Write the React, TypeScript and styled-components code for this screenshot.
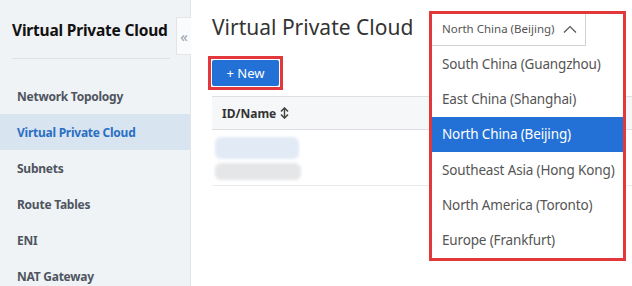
import React from "react";
import styled, { createGlobalStyle } from "styled-components";

const GlobalStyle = createGlobalStyle`
  html, body {
    margin: 0;
    padding: 0;
    background: #fff;
  }
  body {
    font-family: "Noto Sans", "Open Sans", Arial, sans-serif;
    color: #333;
  }
`;

const Page = styled.div`
  display: flex;
  width: 632px;
  height: 286px;
  overflow: hidden;
`;

const Sidebar = styled.aside`
  position: relative;
  flex: 0 0 190px;
  background: #f0f3f6;
  border-right: 1px solid #e3e7ea;
`;

const SideTitle = styled.div`
  height: 59px;
  margin: 0 20px 0 12px;
  padding-top: 2px;
  box-sizing: border-box;
  display: flex;
  align-items: center;
  font-size: 15.5px;
  font-weight: 700;
  color: #111;
  letter-spacing: -0.2px;
  border-bottom: 1px solid #dde2e6;
  white-space: nowrap;
`;

const Collapse = styled.div`
  position: absolute;
  top: 17px;
  right: -1px;
  width: 15px;
  height: 38px;
  background: #f9fbfc;
  border: 1px solid #e1e5e8;
  border-right: none;
  box-sizing: border-box;
  display: flex;
  align-items: center;
  justify-content: center;
  color: #9aa3ac;
  font-size: 15px;
`;

const Menu = styled.ul`
  list-style: none;
  margin: 19px 0 0;
  padding: 0;
`;

const MenuItem = styled.li<{ active?: boolean }>`
  height: 36px;
  display: flex;
  align-items: center;
  padding-left: 17px;
  font-size: 12px;
  font-weight: 700;
  letter-spacing: -0.25px;
  color: ${(p) => (p.active ? "#2a6fc4" : "#4f5560")};
  background: ${(p) => (p.active ? "#d8e4f0" : "transparent")};
`;

const Main = styled.main`
  position: relative;
  flex: 1;
  padding: 0 0 0 21px;
`;

const PageTitle = styled.h1`
  margin: 0;
  height: 56px;
  display: flex;
  align-items: center;
  padding-bottom: 2px;
  box-sizing: border-box;
  font-size: 21px;
  font-weight: 400;
  color: #333;
  letter-spacing: 0;
`;

const Highlight = styled.div`
  display: inline-flex;
  border: 3px solid #e2383c;
  padding: 1px;
  margin-left: -4px;
`;

const PrimaryButton = styled.button`
  width: 67px;
  height: 26px;
  border: none;
  border-radius: 2px;
  background: #2371d6;
  color: #fff;
  font-family: inherit;
  font-size: 13px;
  padding: 0;
`;

const Table = styled.div`
  margin-top: 6px;
  width: 440px;
`;

const HeadRow = styled.div`
  height: 32px;
  display: flex;
  align-items: center;
  padding-left: 10px;
  background: #f6f7f9;
  border-top: 1px solid #dcdfe3;
  border-bottom: 1px solid #dcdfe3;
  font-size: 12px;
  font-weight: 700;
  color: #333;
  gap: 4px;
`;

const BodyRow = styled.div`
  height: 56px;
  border-bottom: 1px solid #e8eaec;
  display: flex;
  flex-direction: column;
  gap: 4px;
  padding: 7px 0 0 3px;
  box-sizing: border-box;
`;

const Blur = styled.div<{ tone: string; w: number; h: number }>`
  width: ${(p) => p.w}px;
  height: ${(p) => p.h}px;
  background: ${(p) => p.tone};
  border-radius: 6px;
  filter: blur(1.5px);
`;

const Dropdown = styled.div`
  position: absolute;
  top: 11px;
  left: 238px;
  width: 191px;
  background: #fff;
  border: 3px solid #e2383c;
`;

const Trigger = styled.div`
  width: 154px;
  height: 32px;
  box-sizing: border-box;
  border-right: 1px solid #cfd3d7;
  border-bottom: 1px solid #cfd3d7;
  display: flex;
  align-items: center;
  padding: 0 0 2px 10px;
  font-size: 11.5px;
  color: #555;
  gap: 8px;
`;

const Option = styled.div<{ selected?: boolean }>`
  height: 35.3px;
  display: flex;
  align-items: center;
  padding-left: 10px;
  font-size: 13.5px;
  color: ${(p) => (p.selected ? "#fff" : "#555")};
  background: ${(p) => (p.selected ? "#2371d6" : "#fff")};
  white-space: nowrap;
  letter-spacing: -0.15px;
`;

const SortIcon = () => (
  <svg width="9" height="12" viewBox="0 0 9 12">
    <path d="M1 4.5 L4.5 1 L8 4.5" fill="none" stroke="#444" strokeWidth="1.6" />
    <path d="M1 7.5 L4.5 11 L8 7.5" fill="none" stroke="#444" strokeWidth="1.6" />
    <path d="M4.5 2 V10" stroke="#444" strokeWidth="1.4" />
  </svg>
);

const ChevronUp = () => (
  <svg width="14" height="8" viewBox="0 0 14 8">
    <path d="M1 7.5 L7 1.5 L13 7.5" fill="none" stroke="#555" strokeWidth="1.2" />
  </svg>
);

const menu = [
  "Network Topology",
  "Virtual Private Cloud",
  "Subnets",
  "Route Tables",
  "ENI",
  "NAT Gateway",
];

const regions = [
  "South China (Guangzhou)",
  "East China (Shanghai)",
  "North China (Beijing)",
  "Southeast Asia (Hong Kong)",
  "North America (Toronto)",
  "Europe (Frankfurt)",
];

export default function App() {
  const current = "North China (Beijing)";
  return (
    <Page>
      <GlobalStyle />
      <Sidebar>
        <SideTitle>Virtual Private Cloud</SideTitle>
        <Collapse>«</Collapse>
        <Menu>
          {menu.map((m) => (
            <MenuItem key={m} active={m === "Virtual Private Cloud"}>
              {m}
            </MenuItem>
          ))}
        </Menu>
      </Sidebar>
      <Main>
        <PageTitle>Virtual Private Cloud</PageTitle>
        <Highlight>
          <PrimaryButton>+ New</PrimaryButton>
        </Highlight>
        <Table>
          <HeadRow>
            ID/Name <SortIcon />
          </HeadRow>
          <BodyRow>
            <Blur tone="#e2eaf6" w={84} h={22} />
            <Blur tone="#e5e6e8" w={86} h={17} />
          </BodyRow>
        </Table>
        <Dropdown>
          <Trigger>
            {current}
            <ChevronUp />
          </Trigger>
          {regions.map((r) => (
            <Option key={r} selected={r === current}>
              {r}
            </Option>
          ))}
        </Dropdown>
      </Main>
    </Page>
  );
}
